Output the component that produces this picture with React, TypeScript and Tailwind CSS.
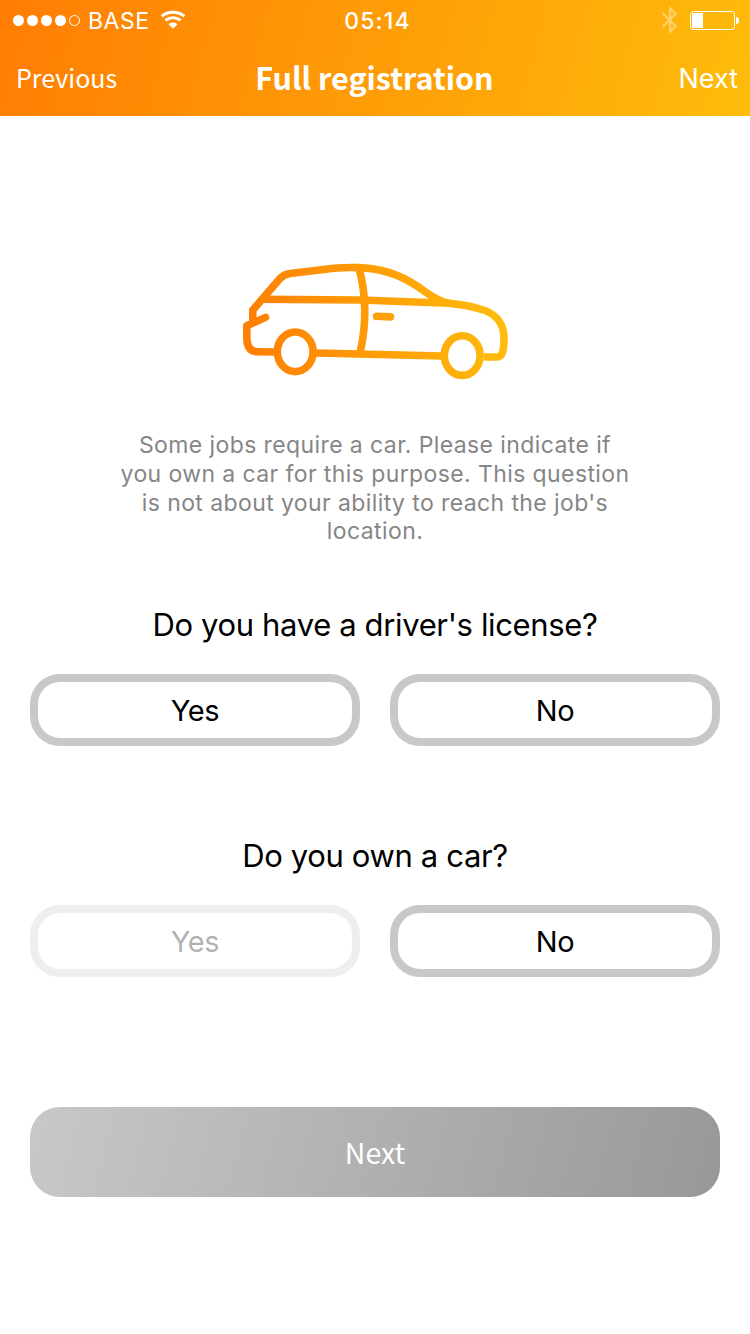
import React from "react";

const Wifi = () => (
  <svg className="ml-[11px] h-[20px] w-[26px]" viewBox="0 0 26 20" fill="none" stroke="white" strokeWidth="3">
    <path d="M1.7 6.3 C8 0.9 18 0.9 24.3 6.3" />
    <path d="M5.4 10.4 C10 6.7 16 6.7 20.6 10.4" />
    <path d="M8.5 14.2 C11 11.8 15 11.8 17.5 14.2 L13 18.7 Z" fill="white" stroke="none" />
  </svg>
);

const Bluetooth = () => (
  <svg className="h-[28px] w-[16px] opacity-40" viewBox="0 0 16 28" fill="none" stroke="white" strokeWidth="2.2">
    <path d="M0.8 7.2 L13.6 20.2 L8.2 25.4 V2.6 L13.6 7.8 L0.8 20.8" />
  </svg>
);

const Battery = () => (
  <svg className="ml-[12px] h-[20px] w-[50px]" viewBox="0 0 50 20" fill="none">
    <rect x="0.5" y="1.5" width="44" height="18" rx="3" stroke="white" />
    <rect x="2" y="3" width="11" height="15" rx="1" fill="white" />
    <path d="M46 7 h0.5 a2.5 3.5 0 0 1 0 7 h-0.5 z" fill="white" />
  </svg>
);

const Car = () => (
  <svg className="h-[122px] w-[272px]" viewBox="239 260 272 122" fill="none">
    <defs>
      <linearGradient id="car" gradientUnits="userSpaceOnUse" x1="243" y1="340" x2="508" y2="300">
        <stop offset="0" stopColor="#ff7d03" />
        <stop offset="1" stopColor="#ffbe0c" />
      </linearGradient>
    </defs>
    <g stroke="url(#car)" strokeWidth="7.6" strokeLinecap="round" strokeLinejoin="round">
      <path strokeLinecap="butt" d="M252.8 324 V310 L280 278.5 Q284 274.4 290 273.6 L334 268.3 Q346 267.2 358 267.6 C384 268 402 276 417 286 C428 293.5 437 301 449 303.2" />
      <path d="M262 299.3 L360 300 L449 303.2 C462 304.4 475 307 485 310.5 C498 315.5 504 326 504 338 C504 352 502 357 497 357 H484" strokeLinecap="butt" />
      <path d="M359 268 Q370 309 360.2 352" />
      <path d="M376.6 316.3 L390.5 316.9" />
      <path d="M265.5 317.4 L246.8 325.8 V338 Q247 351.8 258 351.8 L274 352" />
      <path d="M316 353 L442 356" strokeLinecap="butt" />
      <ellipse cx="295.2" cy="351.8" rx="17.9" ry="19.8" />
      <ellipse cx="462.2" cy="355.6" rx="17.9" ry="19.8" />
    </g>
  </svg>
);

function Choice({ label, disabled = false }: { label: string; disabled?: boolean }) {
  return (
    <button
      disabled={disabled}
      className={`flex h-[72px] flex-1 items-center justify-center rounded-[30px] border-8 border-[#c8c8c8] pt-[2px] text-[29px] leading-[40px] tracking-[-0.4px] text-black ${disabled ? "opacity-30" : ""}`}
    >
      {label}
    </button>
  );
}

export default function App() {
  return (
    <div className="flex h-[1334px] w-[750px] flex-col bg-white font-['Inter',sans-serif]">
      <header className="h-[116px] bg-[linear-gradient(105deg,#ff7d03,#febc0b)] text-white">
        <div className="grid h-[40px] grid-cols-[1fr_auto_1fr] items-center pl-[13px] pr-[10px]">
          <div className="flex items-center">
            <div className="flex gap-[3px]">
              <i className="size-[11px] rounded-full bg-white" />
              <i className="size-[11px] rounded-full bg-white" />
              <i className="size-[11px] rounded-full bg-white" />
              <i className="size-[11px] rounded-full bg-white" />
              <i className="size-[11px] rounded-full border border-white" />
            </div>
            <span className="ml-[8px] w-[61px] pt-[2px] text-[23px] leading-[38px] tracking-[0.5px]">BASE</span>
            <Wifi />
          </div>
          <span className="pl-[2px] pt-[2px] text-[23px] font-medium leading-[38px] tracking-[1.2px]">05:14</span>
          <div className="flex items-center justify-end">
            <Bluetooth />
            <Battery />
          </div>
        </div>
        <div className="grid h-[76px] grid-cols-[1fr_auto_1fr] items-center pl-[16px] pr-[12px]">
          <span className="pb-[2px] font-['Noto_Sans_CJK_SC',sans-serif] text-[25px] leading-[74px]">Previous</span>
          <h1 className="-translate-x-[2.5px] pb-[2px] font-['Noto_Sans_CJK_SC',sans-serif] text-[30.5px] font-bold leading-[74px]">Full registration</h1>
          <span className="pt-[2px] text-right text-[27px] leading-[74px]">Next</span>
        </div>
      </header>
      <main className="flex flex-col items-center px-[30px] pt-[144px]">
        <Car />
        <p className="mt-[49px] text-center text-[23px] leading-[28.8px] tracking-[0.4px] whitespace-nowrap text-[#868686]">
          Some jobs require a car. Please indicate if<br />
          you own a car for this purpose. This question<br />
          is not about your ability to reach the job's<br />
          location.
        </p>
        <h2 className="mt-[59px] text-[31px] leading-[40px] tracking-[-0.36px] text-black">Do you have a driver's license?</h2>
        <div className="mt-[29px] flex w-full gap-[30px]">
          <Choice label="Yes" />
          <Choice label="No" />
        </div>
        <h2 className="mt-[90px] text-[31px] leading-[40px] tracking-[-0.36px] text-black">Do you own a car?</h2>
        <div className="mt-[29px] flex w-full gap-[30px]">
          <Choice label="Yes" disabled />
          <Choice label="No" />
        </div>
        <button className="mt-[130px] h-[90px] w-full rounded-[30px] bg-[linear-gradient(105deg,#c8c8c8,#989898)] font-['Noto_Sans_CJK_SC',sans-serif] text-[28.5px] leading-[90px] text-white">
          Next
        </button>
      </main>
    </div>
  );
}
